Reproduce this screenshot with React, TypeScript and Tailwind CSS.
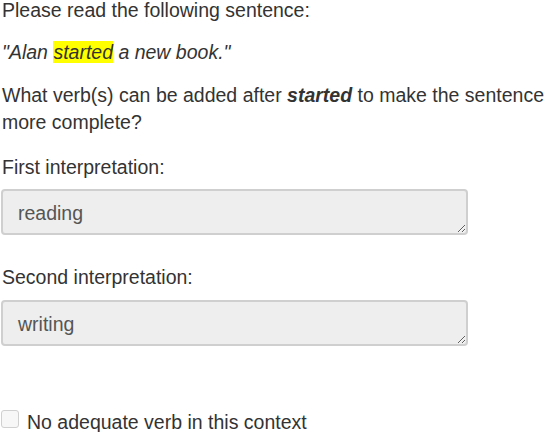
export default function App() {
  return (
    <div className="w-[546px] h-[432px] overflow-hidden bg-white text-[#333] text-[19.5px] leading-[27px] font-['Liberation_Sans',Arial,sans-serif]">
      <div className="-mt-[3px] pl-[2px]">
        <p className="mb-[15px]">Please read the following sentence:</p>
        <p className="mb-[16px] italic">
          "Alan <span className="bg-[#ffff00]">started</span> a new book."
        </p>
        <p className="mb-[18px]">
          What verb(s) can be added after <b className="italic">started</b> to make the sentence more complete?
        </p>
      </div>
      <div className="pl-[2px]">First interpretation:</div>
      <textarea
        readOnly
        value="reading"
        className="mt-[8px] ml-px block w-[467px] h-[46px] px-[15px] pt-[10px] pb-[8px] rounded-[4px] border-2 border-[#cfcfcf] bg-[#eeeeee] text-[#555] text-[19.5px] leading-[24px] outline-none"
      />
      <div className="mt-[29px] pl-[2px]">Second interpretation:</div>
      <textarea
        readOnly
        value="writing"
        className="mt-[9px] ml-px block w-[467px] h-[46px] px-[15px] pt-[10px] pb-[8px] rounded-[4px] border-2 border-[#cfcfcf] bg-[#eeeeee] text-[#555] text-[19.5px] leading-[24px] outline-none"
      />
      <label className="mt-[63px] ml-px flex items-start gap-[8px]">
        <span className="mt-[1px] w-[18px] h-[18px] rounded-[3px] border border-[#d0d0d0] bg-[#f7f7f7] shrink-0" />
        <span>No adequate verb in this context</span>
      </label>
    </div>
  );
}
